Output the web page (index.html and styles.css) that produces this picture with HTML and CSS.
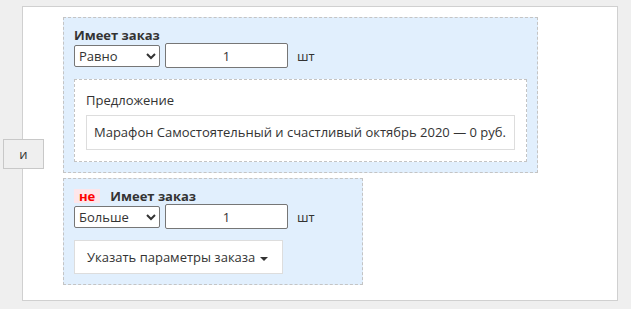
FILE: index.html
```html
<!DOCTYPE html>
<html lang="ru">
<head>
    <meta charset="UTF-8">
    <title>Условия</title>
    <link rel="stylesheet" href="styles.css">
</head>
<body>
    <div class="conditions">
        <!-- логическая связка -->
        <div class="logic-op">и</div>

        <div class="cond">
            <div class="cond-title">Имеет заказ</div>
            <div class="cond-row">
                <select class="cmp">
                    <option>Равно</option>
                </select>
                <input class="qty" type="text" value="1">
                <span class="unit">шт</span>
            </div>
            <div class="offer">
                <div class="offer-label">Предложение</div>
                <div class="offer-item">Марафон Самостоятельный и счастливый октябрь 2020 — 0 руб.</div>
            </div>
        </div>

        <div class="cond cond-small">
            <div class="cond-title"><span class="not">не</span>Имеет заказ</div>
            <div class="cond-row">
                <select class="cmp">
                    <option>Больше</option>
                </select>
                <input class="qty" type="text" value="1">
                <span class="unit">шт</span>
            </div>
            <button class="params">Указать параметры заказа<span class="caret"></span></button>
        </div>
    </div>
</body>
</html>
```

FILE: styles.css
```css
* {
    box-sizing: border-box;
}

body {
    margin: 0;
    background: #efefef;
    font-family: 'Open Sans', 'Liberation Sans', sans-serif;
    font-size: 13px;
    color: #333;
}

/* общий контейнер */
.conditions {
    position: relative;
    width: 596px;
    margin: 6px 0 0 22px;
    padding: 10px 0 15px 40px;
    background: #fff;
    border: 1px solid #d0d0d0;
}

.logic-op {
    position: absolute;
    left: -20px;
    top: 50%;
    transform: translateY(-50%);
    width: 41px;
    height: 30px;
    line-height: 28px;
    text-align: center;
    background: #efefef;
    border: 1px solid #c8c8c8;
}

/* блок условия */
.cond {
    width: 475px;
    padding: 9px 10px 10px;
    background: #e1effd;
    border: 1px dashed #c4c4c4;
}

.cond + .cond {
    margin-top: 5px;
}

.cond-small {
    width: 300px;
}

.cond-title {
    font-weight: bold;
    font-size: 13px;
    line-height: 16px;
    display: flex;
    align-items: center;
}

.not {
    display: inline-block;
    padding: 0 5px;
    margin-right: 10px;
    line-height: 14px;
    background: #fde6ea;
    color: #f00;
}

.cond-row {
    display: flex;
    align-items: center;
    height: 25px;
}

.cmp {
    width: 86px;
    height: 22px;
    font-family: inherit;
    font-size: 13px;
    color: #333;
    background: #fff;
    border: 1px solid #767676;
    border-radius: 2px;
}

.qty {
    width: 123px;
    height: 25px;
    margin-left: 5px;
    text-align: center;
    font-family: inherit;
    font-size: 13px;
    color: #333;
    border: 1px solid #767676;
    border-radius: 2px;
}

.unit {
    margin-left: 9px;
}

/* предложение */
.offer {
    margin-top: 11px;
    padding: 10px 11px 11px 11px;
    background: #fff;
    border: 1px dashed #c4c4c4;
}

.offer-label {
    line-height: 20px;
    margin-bottom: 5px;
}

.offer-item {
    padding: 8px 7px;
    line-height: 17px;
    border: 1px solid #ddd;
}

/* кнопка параметров */
.params {
    display: block;
    margin-top: 11px;
    width: 209px;
    height: 34px;
    padding: 0 12px;
    font-family: inherit;
    font-size: 13px;
    color: #333;
    text-align: left;
    background: #fff;
    border: 1px solid #ddd;
}

.caret {
    display: inline-block;
    width: 0;
    height: 0;
    margin-left: 5px;
    vertical-align: middle;
    border-left: 4px solid transparent;
    border-right: 4px solid transparent;
    border-top: 4px solid #333;
}
```
